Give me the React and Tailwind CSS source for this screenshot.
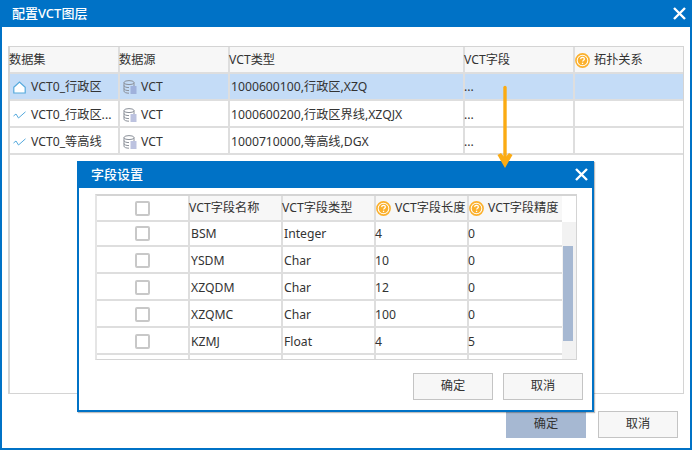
const FONT = 'font-["Noto_Sans","Noto_Sans_CJK_SC",sans-serif]';

function Help() {
  return (
    <svg width="15" height="15" viewBox="0 0 15 15" className="shrink-0">
      <circle cx="7.5" cy="7.5" r="6.6" fill="#fff" stroke="#fbb02c" strokeWidth="1.6" />
      <circle cx="7.5" cy="7.5" r="4.8" fill="#fbb02c" />
      <path d="M5.6 6.1c.1-1.1.9-1.7 1.9-1.7s1.9.6 1.9 1.5c0 1.3-1.8 1.3-1.8 2.7" fill="none" stroke="#fff" strokeWidth="1.2" />
      <rect x="6.9" y="9.7" width="1.3" height="1.3" fill="#fff" />
    </svg>
  );
}

function Close({ size = 13 }) {
  return (
    <svg width={size} height={size} viewBox="0 0 13 13">
      <path d="M1 1l11 11M12 1L1 12" stroke="#fff" strokeWidth="2.4" />
    </svg>
  );
}

function DbIcon() {
  return (
    <svg width="14" height="14" viewBox="0 0 14 14" className="shrink-0">
      <ellipse cx="6" cy="2.6" rx="5" ry="2" fill="none" stroke="#8a8f98" />
      <path d="M1 2.6v8.6c0 1.1 2.2 2 5 2M11 2.6V6M1 5.6c0 1.1 2.2 2 5 2M1 8.6c0 1.1 2.2 2 5 2" fill="none" stroke="#8a8f98" />
      <path d="M7.5 7h6M7.5 9h6M7.5 11h6M7.5 13h6" stroke="#7a86c0" strokeWidth="1" />
    </svg>
  );
}

function PolyIcon() {
  return (
    <svg width="13" height="13" viewBox="0 0 13 13" className="shrink-0">
      <path d="M.8 6.2L6.5 1l5.7 5.2V12H.8z" fill="#fff" stroke="#55a9dc" strokeWidth="1.2" />
    </svg>
  );
}

function LineIcon() {
  return (
    <svg width="13" height="8" viewBox="0 0 13 8" className="shrink-0">
      <path d="M.5 5l2.5-2 2.5 4L12.5 .8" fill="none" stroke="#55a9dc" strokeWidth="1" />
    </svg>
  );
}

const outerCols = "grid grid-cols-[110px_110px_235px_110px_109px]";
const innerCols = "grid grid-cols-[93px_93px_93px_93px_93px]";

function OuterRow({ icon, name, type, selected }) {
  const pt = selected ? "pt-[1px]" : "pt-[3px]";
  return (
    <div className={`${outerCols} h-[27px] border-b-2 border-[#dedede] ${selected ? "bg-[#c4dcf7]" : "bg-white"}`}>
      <div className={`flex items-center pl-[3px] gap-[5px] ${pt} border-r-2 border-[#dedede] whitespace-nowrap overflow-hidden`}>
        {icon}
        <span>{name}</span>
      </div>
      <div className={`flex items-center pl-[3px] gap-[4px] ${pt} border-r-2 border-[#dedede]`}>
        <DbIcon />
        <span>VCT</span>
      </div>
      <div className={`flex items-center pl-[1px] ${pt} border-r-2 border-[#dedede] whitespace-nowrap`}>{type}</div>
      <div className={`flex items-center ${pt} border-r-2 border-[#dedede]`}>
        <span className="-ml-[1px]">...</span>
      </div>
      <div />
    </div>
  );
}

function Check() {
  return <div className="w-[15px] h-[15px] rounded-[2px] border-2 border-[#c8c8c8] bg-white" />;
}

function InnerRow({ cells, first }) {
  const pt = first ? "pt-[1px]" : "pt-[3px]";
  return (
    <div className={`${innerCols} ${first ? "h-[25px]" : "h-[27px]"} border-b-2 border-[#dedede]`}>
      <div className={`flex items-center justify-center border-r-2 border-[#dedede] ${first ? "" : "pt-[1px]"}`}>
        <Check />
      </div>
      {cells.map((c, i) => (
        <div
          key={i}
          className={`flex items-center ${pt} ${i < 2 ? "pl-[1px]" : ""} ${i < 3 ? "border-r-2 border-[#dedede]" : ""}`}
        >
          <span className={i < 2 ? "" : "-ml-[1px]"}>{c}</span>
        </div>
      ))}
    </div>
  );
}

function Btn({ children, primary }) {
  return (
    <div
      className={`w-[80px] h-[27px] flex items-center justify-center ${
        primary ? "bg-[#a6b8d2]" : "bg-[#f7f7f7] border-[1.5px] border-[#c4c4c4]"
      }`}
    >
      {children}
    </div>
  );
}

export default function App() {
  return (
    <div className={`relative w-[692px] h-[450px] overflow-hidden bg-white border-x-2 border-b-2 border-[#0072c6] text-[12.2px] leading-none text-[#333] ${FONT}`}>
      <div className="h-[27px] -mx-[2px] bg-[#0072c6] flex items-center justify-between pl-[12px] pr-[6px] text-white text-[13px] font-medium">
        <span>配置VCT图层</span>
        <Close />
      </div>

      <div className="mx-[6px] mt-[19px] h-[348px] border-2 border-[#d4d4d4] border-b border-r">
        <div className={`${outerCols} h-[27px] -mt-[1px] bg-[#f7f7f7] border-b-2 border-[#dedede]`}>
          <div className="flex items-center pt-[1px] border-r-2 border-[#dedede]"><span className="-ml-[1px]">数据集</span></div>
          <div className="flex items-center pt-[1px] border-r-2 border-[#dedede]"><span className="-ml-[1px]">数据源</span></div>
          <div className="flex items-center pt-[1px] border-r-2 border-[#dedede]"><span className="-ml-[1px]">VCT类型</span></div>
          <div className="flex items-center pt-[1px] border-r-2 border-[#dedede]"><span className="-ml-[1px]">VCT字段</span></div>
          <div className="flex items-center pt-[1px] gap-[4px]"><Help /><span>拓扑关系</span></div>
        </div>
        <OuterRow selected icon={<PolyIcon />} name="VCT0_行政区" type="1000600100,行政区,XZQ" />
        <OuterRow icon={<LineIcon />} name="VCT0_行政区..." type="1000600200,行政区界线,XZQJX" />
        <OuterRow icon={<LineIcon />} name="VCT0_等高线" type="1000710000,等高线,DGX" />
      </div>

      <div className="flex justify-end gap-[12px] mt-[17px] pr-[12px]">
        <Btn primary>确定</Btn>
        <Btn>取消</Btn>
      </div>

      {/* Arrow annotation */}
      <svg className="absolute left-[493px] top-[84px] z-20" width="20" height="86" viewBox="0 0 20 86">
        <path d="M10 3.5v74" stroke="#fbab13" strokeWidth="3.4" strokeLinecap="round" />
        <path d="M2.5 71L6 69l4 5 4-5 3.5 2L10 84z" fill="#fbab13" />
      </svg>

      {/* Field settings dialog */}
      <div className="absolute left-[75px] top-[161px] z-10 w-[517px] h-[251px] bg-white border-2 border-t-0 border-[#0072c6] shadow-[1px_1px_1px_rgba(0,0,0,0.25)]">
        <div className="h-[27px] bg-[#0072c6] flex items-center justify-between pl-[12px] pr-[4px] text-white text-[13px] font-medium">
          <span>字段设置</span>
          <Close />
        </div>
        <div className="ml-[16px] mt-[6px] w-[482px] h-[166px] border-t-2 border-r border-b border-[#d4d4d4] border-l-2 border-l-[#e5e5e5] flex overflow-hidden">
          <div className="w-[465px] shrink-0">
            <div className={`${innerCols} h-[26px] bg-[#f7f7f7] border-b-2 border-[#dedede]`}>
              <div className="flex items-center justify-center border-r-2 border-[#dedede] bg-white"><Check /></div>
              <div className="flex items-center pt-[1px] border-r-2 border-[#dedede]"><span className="-ml-[1px]">VCT字段名称</span></div>
              <div className="flex items-center pt-[1px] border-r-2 border-[#dedede]"><span className="-ml-[1px]">VCT字段类型</span></div>
              <div className="flex items-center pt-[1px] gap-[4px] border-r-2 border-[#dedede] whitespace-nowrap"><Help /><span>VCT字段长度</span></div>
              <div className="flex items-center pt-[1px] gap-[4px] whitespace-nowrap"><Help /><span>VCT字段精度</span></div>
            </div>
            <InnerRow first cells={["BSM", "Integer", "4", "0"]} />
            <InnerRow cells={["YSDM", "Char", "10", "0"]} />
            <InnerRow cells={["XZQDM", "Char", "12", "0"]} />
            <InnerRow cells={["XZQMC", "Char", "100", "0"]} />
            <InnerRow cells={["KZMJ", "Float", "4", "5"]} />
            <div className={`${innerCols} h-[5px]`}>
              <div className="border-r-2 border-[#dedede]" />
              <div className="border-r-2 border-[#dedede]" />
              <div className="border-r-2 border-[#dedede]" />
              <div className="border-r-2 border-[#dedede]" />
              <div />
            </div>
          </div>
          <div className="flex-1 flex flex-col">
            <div className="h-[26px] shrink-0 bg-white" />
            <div className="flex-1 bg-[#f2f2f2] pl-[1px] pr-[3px] pt-[24px]">
              <div className="h-[95px] bg-[#a6b8d2]" />
            </div>
          </div>
        </div>
        <div className="flex justify-end gap-[10px] mt-[13px] pr-[9px]">
          <Btn>确定</Btn>
          <Btn>取消</Btn>
        </div>
      </div>
    </div>
  );
}
